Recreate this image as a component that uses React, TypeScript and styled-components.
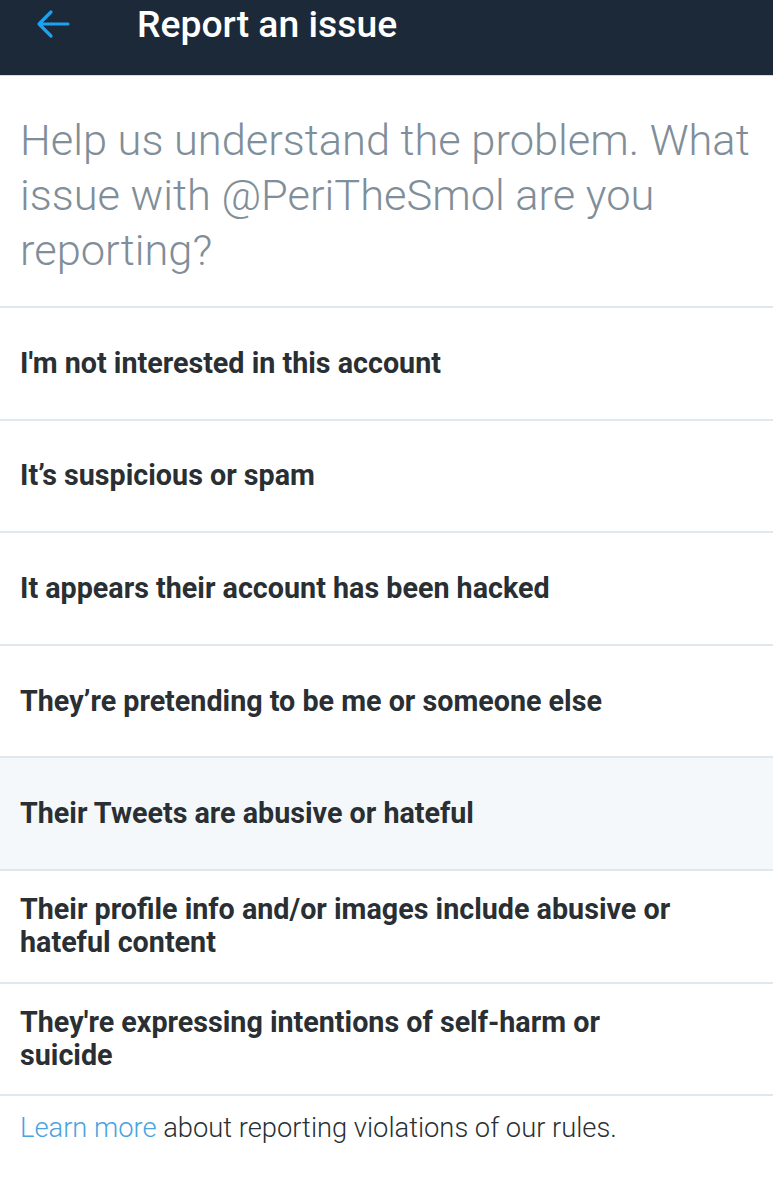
import React from 'react';
import styled, { createGlobalStyle } from 'styled-components';

const GlobalStyle = createGlobalStyle`
  html, body {
    margin: 0;
    padding: 0;
    background: #ffffff;
  }
  body {
    font-family: Roboto, "Liberation Sans", Arial, sans-serif;
  }
`;

const Page = styled.div`
  width: 773px;
  min-height: 1200px;
  background: #ffffff;
`;

const Header = styled.header`
  height: 75px;
  background: #1c2938;
  display: flex;
  align-items: flex-start;
  border-bottom: 1px solid #d4dbe0;
`;

const BackButton = styled.button`
  width: 137px;
  height: 48px;
  padding: 0 0 0 36px;
  border: none;
  background: transparent;
  display: flex;
  align-items: center;
  cursor: pointer;
`;

const Title = styled.h1`
  margin: 0;
  height: 48px;
  line-height: 48px;
  color: #ffffff;
  font-size: 37.3px;
  font-weight: 500;
`;

const Question = styled.p`
  margin: 0;
  padding: 37px 20px 28px 20px;
  color: #7f8e99;
  font-size: 43.4px;
  font-weight: 300;
  line-height: 55px;
  border-bottom: 2px solid #e1e8ed;
`;

const Option = styled.div<{ $active?: boolean }>`
  min-height: 112.6px;
  box-sizing: border-box;
  padding: 20px 90px 20px 20px;
  display: flex;
  align-items: center;
  background: ${(p) => (p.$active ? '#f5f8fa' : '#ffffff')};
  border-bottom: 2px solid #e1e8ed;
  color: #292f33;
  font-size: 28.7px;
  font-weight: 700;
  line-height: 33px;
`;

const Footer = styled.p`
  margin: 0;
  padding: 14px 20px;
  color: #292f33;
  font-size: 27.3px;
  font-weight: 300;
  line-height: 36px;
`;

const LearnLink = styled.a`
  color: #4aa3df;
  text-decoration: none;
`;

const options = [
  "I'm not interested in this account",
  'It’s suspicious or spam',
  'It appears their account has been hacked',
  'They’re pretending to be me or someone else',
  'Their Tweets are abusive or hateful',
  'Their profile info and/or images include abusive or hateful content',
  "They're expressing intentions of self-harm or suicide",
];

const BackArrow: React.FC = () => (
  <svg width="34" height="30" viewBox="0 0 34 30" fill="none">
    <path
      d="M32 15H4M15 3L3 15l12 12"
      stroke="#1da1f2"
      strokeWidth="3.2"
      strokeLinecap="round"
      strokeLinejoin="round"
    />
  </svg>
);

const App: React.FC = () => {
  return (
    <Page>
      <GlobalStyle />
      <Header>
        <BackButton aria-label="Back">
          <BackArrow />
        </BackButton>
        <Title>Report an issue</Title>
      </Header>
      <Question>
        Help us understand the problem. What issue with @PeriTheSmol are you reporting?
      </Question>
      {options.map((text, i) => (
        <Option key={text} $active={i === 4}>
          {text}
        </Option>
      ))}
      <Footer>
        <LearnLink href="#">Learn more</LearnLink> about reporting violations of our rules.
      </Footer>
    </Page>
  );
};

export default App;
